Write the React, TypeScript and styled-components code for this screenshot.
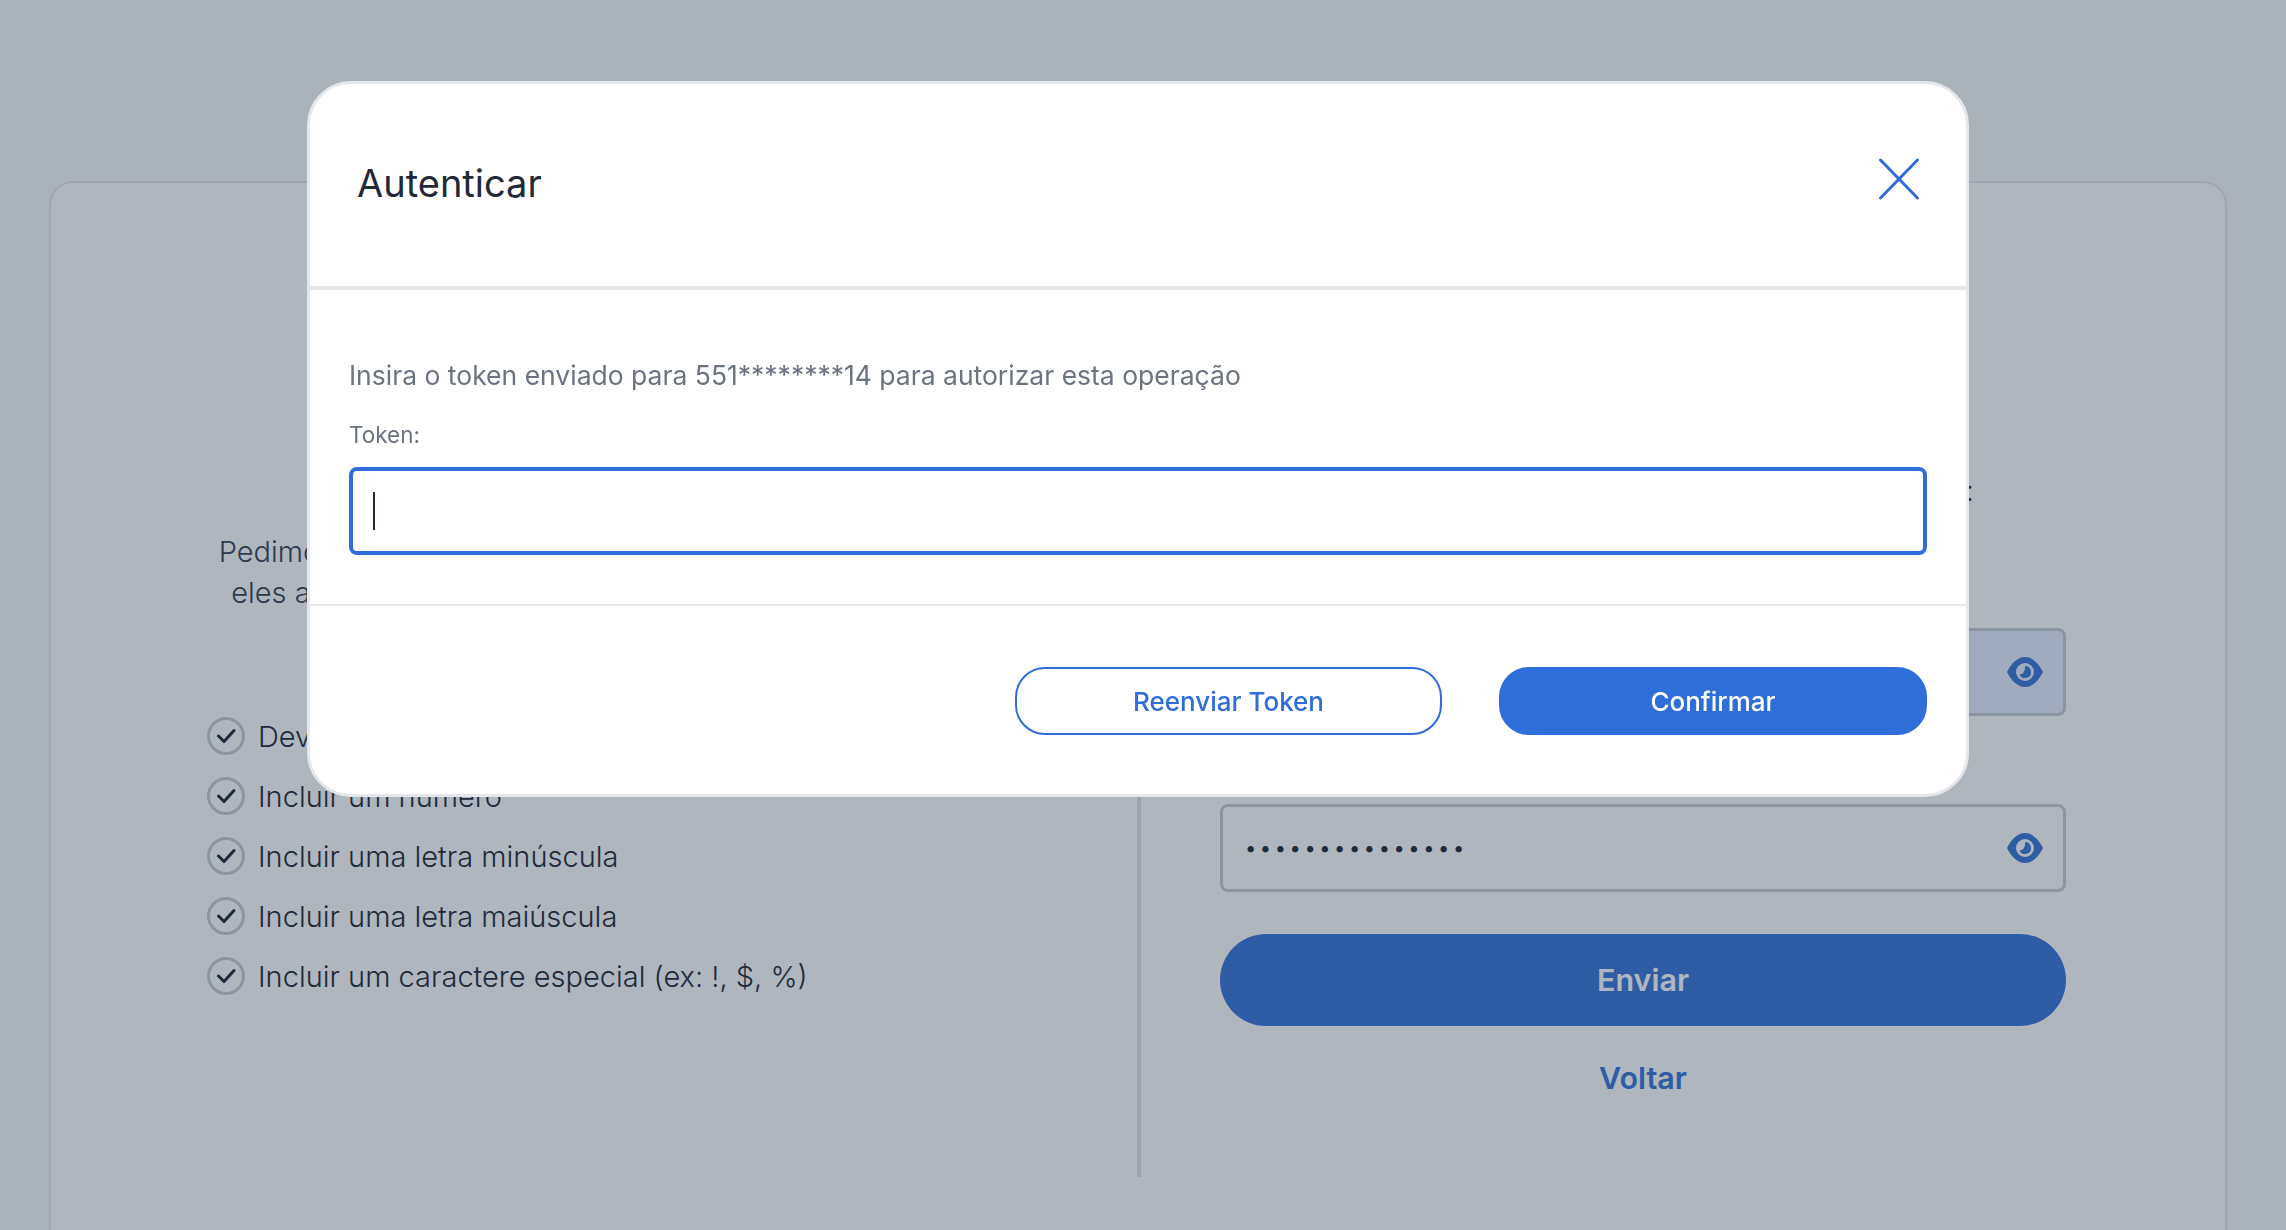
import React from "react";
import styled, { createGlobalStyle } from "styled-components";

const Global = createGlobalStyle`
  html, body { margin: 0; padding: 0; background: #f8f9f9; }
  * { box-sizing: border-box; }
  body { font-family: Inter, "Liberation Sans", sans-serif; color: #1f2937; }
`;

const Page = styled.div`
  height: 1230px;
  overflow: hidden;
  padding: 181px 59px 0 49px;
  background: #f8f9f9;
`;

const Card = styled.section`
  height: 1100px;
  background: #ffffff;
  border: 2px solid #e5e7eb;
  border-radius: 24px 24px 0 0;
  padding-top: 58px;
`;

const Columns = styled.div`
  display: flex;
  height: 936px;
`;

const LeftColumn = styled.div`
  width: 1090px;
  border-right: 4px solid #e0e3e8;
  padding-top: 290px;
`;

const Intro = styled.p`
  margin: 0 auto 103px;
  width: 770px;
  font-size: 29px;
  line-height: 41px;
  font-weight: 300;
  text-align: center;
  white-space: nowrap;
  color: #374151;
`;

const RuleList = styled.ul`
  list-style: none;
  margin: 0;
  padding: 0 0 0 156px;
  display: flex;
  flex-direction: column;
  gap: 20px;
`;

const Rule = styled.li`
  display: flex;
  align-items: center;
  gap: 13px;
  height: 40px;
  font-size: 29px;
  font-weight: 300;
  color: #1f2937;
`;

const RightColumn = styled.div`
  flex: 0 0 846px;
  margin-left: 79px;
  padding-top: 229px;
  display: flex;
  flex-direction: column;
`;

const FormIntro = styled.p`
  margin: 0 0 77px;
  font-size: 29px;
  line-height: 41px;
  font-weight: 300;
  text-align: center;
  white-space: nowrap;
  color: #1f2937;
`;

const FieldLabel = styled.label`
  display: block;
  height: 40px;
  font-size: 26px;
  color: #1f2937;
`;

const PasswordField = styled.div<{ $filled?: boolean }>`
  display: flex;
  align-items: center;
  justify-content: space-between;
  height: 88px;
  padding: 0 20px 0 22px;
  border: 3px solid #c8ccd4;
  border-radius: 8px;
  background: ${(p) => (p.$filled ? "#e8f0fe" : "#ffffff")};
  margin-bottom: ${(p) => (p.$filled ? "48px" : "42px")};
`;

const Dots = styled.input`
  flex: 1;
  min-width: 0;
  border: 0;
  outline: 0;
  padding: 0;
  background: transparent;
  font-family: Inter, sans-serif;
  font-size: 20px;
  letter-spacing: 3.600px;
  color: #1f2937;
`;

const SubmitButton = styled.button`
  height: 92px;
  border: 0;
  border-radius: 46px;
  padding: 0 0 2px;
  background: #3a75d9;
  color: #ffffff;
  font-family: Inter, sans-serif;
  font-size: 30.500px;
  font-weight: 600;
`;

const BackLink = styled.a`
  margin-top: 34px;
  height: 36px;
  line-height: 36px;
  text-align: center;
  font-size: 30.500px;
  font-weight: 600;
  color: #3a75d9;
`;

const Overlay = styled.div`
  position: fixed;
  inset: 0;
  padding: 81px 0 0 307px;
  background: rgba(26, 46, 69, 0.35);
`;

const Modal = styled.div`
  display: flex;
  flex-direction: column;
  width: 1662px;
  height: 716px;
  background: #ffffff;
  border: 3px solid #e5e7eb;
  border-radius: 44px;
`;

const ModalHeader = styled.header`
  display: flex;
  align-items: center;
  justify-content: space-between;
  height: 206px;
  padding: 0 46px 4px 47px;
  border-bottom: 4px solid #e5e7eb;
`;

const ModalTitle = styled.h2`
  margin: 0;
  font-size: 38px;
  font-weight: 400;
  color: #1f2937;
`;

const CloseButton = styled.button`
  display: flex;
  padding: 0;
  border: 0;
  background: none;
  margin-bottom: 8px;
`;

const ModalBody = styled.div`
  height: 316px;
  padding: 65px 39px 0 39px;
  border-bottom: 2px solid #e5e7eb;
`;

const Message = styled.p`
  margin: 0 0 24px;
  font-size: 26.500px;
  line-height: 40px;
  color: #6b7280;
`;

const TokenLabel = styled.label`
  display: block;
  margin-bottom: 16px;
  font-size: 22.500px;
  line-height: 32px;
  color: #6b7280;
`;

const TokenBox = styled.div`
  display: flex;
  align-items: center;
  height: 88px;
  padding-left: 20px;
  border: 4px solid #2f6dd9;
  border-radius: 8px;
`;

const Caret = styled.span`
  width: 2px;
  height: 38px;
  background: #1f2937;
`;

const ModalFooter = styled.footer`
  display: flex;
  justify-content: flex-end;
  gap: 57px;
  padding: 61px 39px 0 0;
`;

const ModalButton = styled.button<{ $primary?: boolean }>`
  width: ${(p) => (p.$primary ? "428px" : "427px")};
  height: 68px;
  border-radius: 30px;
  border: 2px solid #2f6dd9;
  background: ${(p) => (p.$primary ? "#2f6dd9" : "#ffffff")};
  color: ${(p) => (p.$primary ? "#ffffff" : "#2f6dd9")};
  font-family: Inter, sans-serif;
  font-size: 26px;
  font-weight: 500;
`;

const EyeIcon = () => (
  <svg width="36" height="30" viewBox="0 0 36 30" aria-hidden="true" style={{ flex: "none" }}>
    <path
      fill="#3a75d9"
      fillRule="evenodd"
      d="M18 0C26 0 32 7 36 15C32 23 26 30 18 30C10 30 4 23 0 15C4 7 10 0 18 0ZM18 6A9 9 0 1 0 18 24A9 9 0 1 0 18 6Z"
    />
    <path fill="#3a75d9" d="M18 9A6 6 0 1 1 12.500 17.500C16 17.500 18.500 14 18 9Z" />
  </svg>
);

const CheckIcon = () => (
  <svg width="38" height="38" viewBox="0 0 38 38" fill="none" aria-hidden="true" style={{ flex: "none" }}>
    <circle cx="19" cy="19" r="17.500" stroke="#c8ccd4" strokeWidth="3" />
    <path d="M11.500 19L17 24.500L27 13.500" stroke="#1f2937" strokeWidth="3" strokeLinecap="round" strokeLinejoin="round" />
  </svg>
);

const CloseIcon = () => (
  <svg width="42" height="42" viewBox="0 0 42 42" fill="none" aria-hidden="true">
    <path d="M2.500 2L39.500 40M39.500 2L2.500 40" stroke="#2f6dd9" strokeWidth="3" strokeLinecap="round" />
  </svg>
);

const rules = [
  "Deve ter no mínimo 8 caracteres",
  "Incluir um número",
  "Incluir uma letra minúscula",
  "Incluir uma letra maiúscula",
  "Incluir um caractere especial (ex: !, $, %)",
];

export default function App() {
  return (
    <>
      <Global />
      <Page>
        <Card>
          <Columns>
            <LeftColumn>
              <Intro>
                Pedimos que sua senha siga as regras abaixo, para que
                <br />
                eles a mantenham tão segura e protegida de terceiros
              </Intro>
              <RuleList>
                {rules.map((rule) => (
                  <Rule key={rule}>
                    <CheckIcon />
                    {rule}
                  </Rule>
                ))}
              </RuleList>
            </LeftColumn>
            <RightColumn>
              <FormIntro>Para continuar, informe e confirme a nova senha:</FormIntro>
              <FieldLabel>Nova senha:</FieldLabel>
              <PasswordField $filled>
                <Dots type="password" readOnly value="123456789012345" />
                <EyeIcon />
              </PasswordField>
              <FieldLabel>Confirmar senha:</FieldLabel>
              <PasswordField>
                <Dots type="password" readOnly value="123456789012345" />
                <EyeIcon />
              </PasswordField>
              <SubmitButton>Enviar</SubmitButton>
              <BackLink>Voltar</BackLink>
            </RightColumn>
          </Columns>
        </Card>
      </Page>
      <Overlay>
        <Modal>
          <ModalHeader>
            <ModalTitle>Autenticar</ModalTitle>
            <CloseButton aria-label="Fechar">
              <CloseIcon />
            </CloseButton>
          </ModalHeader>
          <ModalBody>
            <Message>Insira o token enviado para 551********14 para autorizar esta operação</Message>
            <TokenLabel>Token:</TokenLabel>
            <TokenBox>
              <Caret />
            </TokenBox>
          </ModalBody>
          <ModalFooter>
            <ModalButton>Reenviar Token</ModalButton>
            <ModalButton $primary>Confirmar</ModalButton>
          </ModalFooter>
        </Modal>
      </Overlay>
    </>
  );
}
